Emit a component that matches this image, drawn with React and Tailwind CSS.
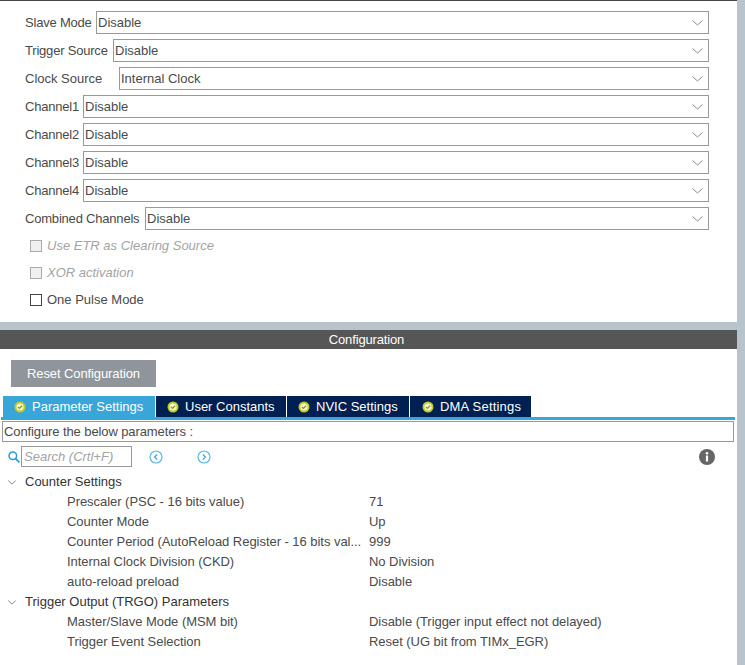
const modes = [
  ['Slave Mode', 'Disable', 'w-[71px] tracking-[-0.2px]'],
  ['Trigger Source', 'Disable', 'w-[88px] tracking-[-0.2px]'],
  ['Clock Source', 'Internal Clock', 'w-[94px]'],
  ['Channel1', 'Disable', 'w-[58px] tracking-[-0.2px]'],
  ['Channel2', 'Disable', 'w-[58px] tracking-[-0.2px]'],
  ['Channel3', 'Disable', 'w-[58px] tracking-[-0.2px]'],
  ['Channel4', 'Disable', 'w-[58px] tracking-[-0.2px]'],
  ['Combined Channels', 'Disable', 'w-[120px] tracking-[-0.2px]'],
]

const tabs = [
  ['Parameter Settings', 'w-[152px] mr-px pl-[11px] bg-[#39a6da]'],
  ['User Constants', 'w-[130px] mr-px pl-[11px] bg-[#002052]'],
  ['NVIC Settings', 'w-[122px] mr-px pl-[11px] bg-[#002052]'],
  ['DMA Settings', 'w-[121px] pl-[12px] tracking-[0.2px] bg-[#002052]'],
]

const groups = [
  {
    name: 'Counter Settings',
    rows: [
      ['Prescaler (PSC - 16 bits value)', '71'],
      ['Counter Mode', 'Up'],
      ['Counter Period (AutoReload Register - 16 bits val...', '999'],
      ['Internal Clock Division (CKD)', 'No Division'],
      ['auto-reload preload', 'Disable'],
    ],
  },
  {
    name: 'Trigger Output (TRGO) Parameters',
    rows: [
      ['Master/Slave Mode (MSM bit)', 'Disable (Trigger input effect not delayed)'],
      ['Trigger Event Selection', 'Reset (UG bit from TIMx_EGR)'],
    ],
  },
]

function Check() {
  return (
    <svg width="12" height="12" viewBox="0 0 12 12" className="shrink-0">
      <circle cx="6" cy="6" r="5.5" fill="#c3cc1f" />
      <circle cx="6" cy="6" r="3.6" fill="#f4f6dc" />
      <path d="M3.9 5.9 5.4 7.4 8.1 4.7" fill="none" stroke="#8d9a12" strokeWidth="1.3" />
    </svg>
  )
}

function Arrow({ right }) {
  return (
    <svg width="14" height="14" viewBox="0 0 14 14" className="shrink-0">
      <circle cx="7" cy="7" r="6" fill="none" stroke="#5cb8e4" strokeWidth="1.2" />
      <path d={right ? 'M5.8 4.4 8.4 7 5.8 9.6' : 'M8.2 4.4 5.6 7 8.2 9.6'} fill="none" stroke="#39a6da" strokeWidth="1.3" />
    </svg>
  )
}

function Chevron() {
  return (
    <svg width="8" height="5" viewBox="0 0 8 5" className="shrink-0">
      <path d="M.3.5 4 4.200 7.700.5" fill="none" stroke="#8a8a8a" />
    </svg>
  )
}

function SelectArrow() {
  return (
    <svg width="11" height="6" viewBox="0 0 11 6" className="shrink-0">
      <path d="M.5.5 5.500 5 10.500.5" fill="none" stroke="#8a8a8a" />
    </svg>
  )
}

export default function App() {
  return (
    <div className="flex w-[745px] h-[665px] overflow-hidden bg-[#b8c4cb] text-[13px] text-[#4a4a4a] font-['Liberation_Sans',Arial,sans-serif]">
      <div className="w-[737px] flex flex-col">
        <div className="h-[322px] bg-white border-t border-[#444] pt-[10px] pl-[25px] pr-[28px]">
          {modes.map(([label, value, w]) => (
            <div key={label} className="flex items-center h-[23px] mb-[5px]">
              <span className={`${w} shrink-0 whitespace-nowrap`}>{label}</span>
              <div className="flex-1 h-full flex items-center justify-between border border-[#999] pl-[1px] pr-[5px]">
                <span>{value}</span>
                <SelectArrow />
              </div>
            </div>
          ))}
          <div className="flex flex-col gap-[15px] pl-[5px] pt-[5px]">
            <label className="flex items-center gap-[5px] h-3 italic text-[#a3a3a3]">
              <span className="w-3 h-3 border border-[#aaa] bg-[#eef0f1]" />
              Use ETR as Clearing Source
            </label>
            <label className="flex items-center gap-[5px] h-3 italic text-[#a3a3a3]">
              <span className="w-3 h-3 border border-[#aaa] bg-[#eef0f1]" />
              XOR activation
            </label>
            <label className="flex items-center gap-[5px] h-3">
              <span className="w-3 h-3 border border-[#444]" />
              One Pulse Mode
            </label>
          </div>
        </div>
        <div className="h-2 shrink-0" />
        <div className="h-[19px] shrink-0 pr-[4px] bg-[#555655] text-white tracking-[-0.15px] flex items-center justify-center">Configuration</div>
        <div className="flex-1 bg-white pt-[11px]">
          <div className="ml-[11px] w-[145px] h-[27px] bg-[#8f959b] text-white tracking-[-0.1px] flex items-center justify-center">Reset Configuration</div>
          <div className="flex pl-[3px] mt-[9px] h-[21px]">
            {tabs.map(([name, cls]) => (
              <div key={name} className={`${cls} flex items-center gap-[6px] text-white`}>
                <Check />
                {name}
              </div>
            ))}
          </div>
          <div className="ml-px mr-[2px] h-[3px] bg-[#39a6da]" />
          <div className="ml-[2px] mr-[3px] mt-px h-[21px] border border-[#999] flex items-center pl-px tracking-[-0.1px]">Configure the below parameters :</div>
          <div className="flex items-center h-[21px] mt-[4px] pl-[8px] pr-[22px]">
            <svg width="12" height="12" viewBox="0 0 12 12" className="shrink-0">
              <circle cx="4.800" cy="4.800" r="3.800" fill="none" stroke="#2f9ad6" strokeWidth="1.500" />
              <path d="M7.600 7.600 11.300 11.300" stroke="#2f9ad6" strokeWidth="1.800" />
            </svg>
            <div className="ml-px w-[111px] h-full border border-[#999] flex items-center pl-[2px] italic text-[#a3a3a3]">Search (Crtl+F)</div>
            <div className="ml-[17px] w-[48px]"><Arrow /></div>
            <Arrow right />
            <svg width="16" height="16" viewBox="0 0 16 16" className="ml-auto shrink-0">
              <circle cx="8" cy="8" r="8" fill="#666" />
              <circle cx="8" cy="4.200" r="1.300" fill="#fff" />
              <rect x="6.900" y="6.500" width="2.200" height="6" fill="#fff" />
            </svg>
          </div>
          <div className="mt-[5px]">
            {groups.map((g) => (
              <div key={g.name}>
                <div className="flex items-center h-5 pl-[8px] text-[#333]">
                  <span className="w-[17px]"><Chevron /></span>
                  {g.name}
                </div>
                {g.rows.map(([k, v]) => (
                  <div key={k} className="flex items-center h-5 pl-[67px] tracking-[-0.04px]">
                    <span className="w-[302px] shrink-0 whitespace-nowrap">{k}</span>
                    <span>{v}</span>
                  </div>
                ))}
              </div>
            ))}
          </div>
        </div>
      </div>
    </div>
  )
}
